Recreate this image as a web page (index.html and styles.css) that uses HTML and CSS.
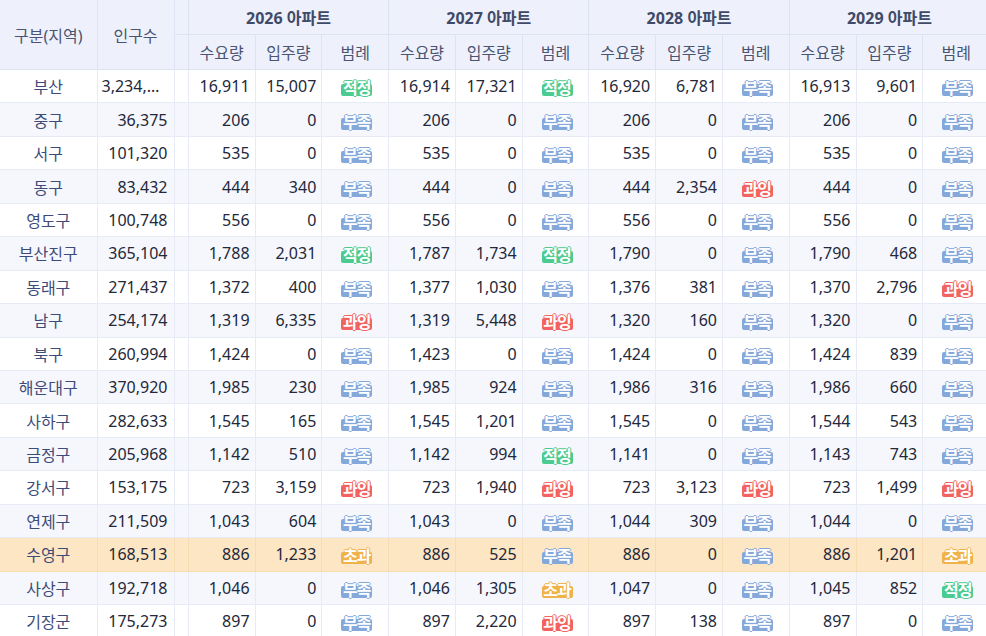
FILE: index.html
```html
<!DOCTYPE html>
<html lang="ko">
<head>
<meta charset="utf-8">
<title>부산 아파트 수급</title>
<link rel="stylesheet" href="styles.css">
</head>
<body>
<table class="grid">
<colgroup>
<col class="c-name"><col class="c-pop"><col class="c-gap">
<col class="c-d"><col class="c-d"><col class="c-l">
<col class="c-d"><col class="c-d"><col class="c-l">
<col class="c-d"><col class="c-d"><col class="c-l">
<col class="c-d"><col class="c-d"><col class="c-l">
</colgroup>
<thead>
<tr>
<th rowspan="2" class="first">구분(지역)</th>
<th rowspan="2">인구수</th>
<th></th>
<th colspan="3" class="grp">2026 아파트</th>
<th colspan="3" class="grp">2027 아파트</th>
<th colspan="3" class="grp">2028 아파트</th>
<th colspan="3" class="grp">2029 아파트</th>
</tr>
<tr>
<th></th>
<th>수요량</th><th>입주량</th><th>범례</th>
<th>수요량</th><th>입주량</th><th>범례</th>
<th>수요량</th><th>입주량</th><th>범례</th>
<th>수요량</th><th>입주량</th><th>범례</th>
</tr>
</thead>
<tbody>
<tr><td class="name">부산</td><td class="pop">3,234,919</td><td></td><td>16,911</td><td>15,007</td><td class="lg"><span class="b ok">적정</span></td><td>16,914</td><td>17,321</td><td class="lg"><span class="b ok">적정</span></td><td>16,920</td><td>6,781</td><td class="lg"><span class="b lack">부족</span></td><td>16,913</td><td>9,601</td><td class="lg"><span class="b lack">부족</span></td></tr>
<tr><td class="name">중구</td><td class="pop">36,375</td><td></td><td>206</td><td>0</td><td class="lg"><span class="b lack">부족</span></td><td>206</td><td>0</td><td class="lg"><span class="b lack">부족</span></td><td>206</td><td>0</td><td class="lg"><span class="b lack">부족</span></td><td>206</td><td>0</td><td class="lg"><span class="b lack">부족</span></td></tr>
<tr><td class="name">서구</td><td class="pop">101,320</td><td></td><td>535</td><td>0</td><td class="lg"><span class="b lack">부족</span></td><td>535</td><td>0</td><td class="lg"><span class="b lack">부족</span></td><td>535</td><td>0</td><td class="lg"><span class="b lack">부족</span></td><td>535</td><td>0</td><td class="lg"><span class="b lack">부족</span></td></tr>
<tr><td class="name">동구</td><td class="pop">83,432</td><td></td><td>444</td><td>340</td><td class="lg"><span class="b lack">부족</span></td><td>444</td><td>0</td><td class="lg"><span class="b lack">부족</span></td><td>444</td><td>2,354</td><td class="lg"><span class="b over">과잉</span></td><td>444</td><td>0</td><td class="lg"><span class="b lack">부족</span></td></tr>
<tr><td class="name">영도구</td><td class="pop">100,748</td><td></td><td>556</td><td>0</td><td class="lg"><span class="b lack">부족</span></td><td>556</td><td>0</td><td class="lg"><span class="b lack">부족</span></td><td>556</td><td>0</td><td class="lg"><span class="b lack">부족</span></td><td>556</td><td>0</td><td class="lg"><span class="b lack">부족</span></td></tr>
<tr><td class="name">부산진구</td><td class="pop">365,104</td><td></td><td>1,788</td><td>2,031</td><td class="lg"><span class="b ok">적정</span></td><td>1,787</td><td>1,734</td><td class="lg"><span class="b ok">적정</span></td><td>1,790</td><td>0</td><td class="lg"><span class="b lack">부족</span></td><td>1,790</td><td>468</td><td class="lg"><span class="b lack">부족</span></td></tr>
<tr><td class="name">동래구</td><td class="pop">271,437</td><td></td><td>1,372</td><td>400</td><td class="lg"><span class="b lack">부족</span></td><td>1,377</td><td>1,030</td><td class="lg"><span class="b lack">부족</span></td><td>1,376</td><td>381</td><td class="lg"><span class="b lack">부족</span></td><td>1,370</td><td>2,796</td><td class="lg"><span class="b over">과잉</span></td></tr>
<tr><td class="name">남구</td><td class="pop">254,174</td><td></td><td>1,319</td><td>6,335</td><td class="lg"><span class="b over">과잉</span></td><td>1,319</td><td>5,448</td><td class="lg"><span class="b over">과잉</span></td><td>1,320</td><td>160</td><td class="lg"><span class="b lack">부족</span></td><td>1,320</td><td>0</td><td class="lg"><span class="b lack">부족</span></td></tr>
<tr><td class="name">북구</td><td class="pop">260,994</td><td></td><td>1,424</td><td>0</td><td class="lg"><span class="b lack">부족</span></td><td>1,423</td><td>0</td><td class="lg"><span class="b lack">부족</span></td><td>1,424</td><td>0</td><td class="lg"><span class="b lack">부족</span></td><td>1,424</td><td>839</td><td class="lg"><span class="b lack">부족</span></td></tr>
<tr><td class="name">해운대구</td><td class="pop">370,920</td><td></td><td>1,985</td><td>230</td><td class="lg"><span class="b lack">부족</span></td><td>1,985</td><td>924</td><td class="lg"><span class="b lack">부족</span></td><td>1,986</td><td>316</td><td class="lg"><span class="b lack">부족</span></td><td>1,986</td><td>660</td><td class="lg"><span class="b lack">부족</span></td></tr>
<tr><td class="name">사하구</td><td class="pop">282,633</td><td></td><td>1,545</td><td>165</td><td class="lg"><span class="b lack">부족</span></td><td>1,545</td><td>1,201</td><td class="lg"><span class="b lack">부족</span></td><td>1,545</td><td>0</td><td class="lg"><span class="b lack">부족</span></td><td>1,544</td><td>543</td><td class="lg"><span class="b lack">부족</span></td></tr>
<tr><td class="name">금정구</td><td class="pop">205,968</td><td></td><td>1,142</td><td>510</td><td class="lg"><span class="b lack">부족</span></td><td>1,142</td><td>994</td><td class="lg"><span class="b ok">적정</span></td><td>1,141</td><td>0</td><td class="lg"><span class="b lack">부족</span></td><td>1,143</td><td>743</td><td class="lg"><span class="b lack">부족</span></td></tr>
<tr><td class="name">강서구</td><td class="pop">153,175</td><td></td><td>723</td><td>3,159</td><td class="lg"><span class="b over">과잉</span></td><td>723</td><td>1,940</td><td class="lg"><span class="b over">과잉</span></td><td>723</td><td>3,123</td><td class="lg"><span class="b over">과잉</span></td><td>723</td><td>1,499</td><td class="lg"><span class="b over">과잉</span></td></tr>
<tr><td class="name">연제구</td><td class="pop">211,509</td><td></td><td>1,043</td><td>604</td><td class="lg"><span class="b lack">부족</span></td><td>1,043</td><td>0</td><td class="lg"><span class="b lack">부족</span></td><td>1,044</td><td>309</td><td class="lg"><span class="b lack">부족</span></td><td>1,044</td><td>0</td><td class="lg"><span class="b lack">부족</span></td></tr>
<tr class="hl"><td class="name">수영구</td><td class="pop">168,513</td><td></td><td>886</td><td>1,233</td><td class="lg"><span class="b exc">초과</span></td><td>886</td><td>525</td><td class="lg"><span class="b lack">부족</span></td><td>886</td><td>0</td><td class="lg"><span class="b lack">부족</span></td><td>886</td><td>1,201</td><td class="lg"><span class="b exc">초과</span></td></tr>
<tr><td class="name">사상구</td><td class="pop">192,718</td><td></td><td>1,046</td><td>0</td><td class="lg"><span class="b lack">부족</span></td><td>1,046</td><td>1,305</td><td class="lg"><span class="b exc">초과</span></td><td>1,047</td><td>0</td><td class="lg"><span class="b lack">부족</span></td><td>1,045</td><td>852</td><td class="lg"><span class="b ok">적정</span></td></tr>
<tr><td class="name">기장군</td><td class="pop">175,273</td><td></td><td>897</td><td>0</td><td class="lg"><span class="b lack">부족</span></td><td>897</td><td>2,220</td><td class="lg"><span class="b over">과잉</span></td><td>897</td><td>138</td><td class="lg"><span class="b lack">부족</span></td><td>897</td><td>0</td><td class="lg"><span class="b lack">부족</span></td></tr>
</tbody>
</table>
</body>
</html>
```
FILE: styles.css
```css
html, body {
  margin: 0;
  padding: 0;
  background: #ffffff;
  overflow: hidden;
}
body {
  font-family: "Noto Sans", "Noto Sans CJK KR", sans-serif;
}
.grid {
  border-collapse: collapse;
  table-layout: fixed;
  width: 989.5px;
}
.c-name { width: 97px; }
.c-pop { width: 77px; }
.c-gap { width: 14.3px; }
.c-d { width: 66.77px; }
.c-l { width: 66.77px; }

.grid th {
  background: #eef1fb;
  color: #4a5573;
  font-weight: 400;
  font-size: 16px;
  height: 34px;
  padding: 0;
  border: 1px solid #dde3f3;
  border-top: none;
  white-space: nowrap;
}
.grid th.first,
.grid td:first-child {
  border-left: none;
}
.grid th.grp {
  font-weight: 700;
  font-size: 16px;
  color: #3f4a68;
}
.grid td {
  height: 32.45px;
  padding: 0 5px;
  font-size: 16px;
  color: #23283a;
  text-align: right;
  white-space: nowrap;
  border: 1px solid #e7ebf5;
}
.grid tbody tr:nth-child(even) td {
  background: #f5f7fd;
}
.grid tbody tr.hl td {
  background: #fde6c3;
  border-color: #f7dbb3;
}
.grid td.name {
  text-align: center;
  color: #3d4b78;
  font-size: 16px;
  padding: 0;
}
.grid td.pop {
  overflow: hidden;
  text-overflow: ellipsis;
  padding: 0 6px 0 4px;
}
.grid td.lg {
  text-align: center;
  padding: 0 0 0 3px;
}
.b {
  display: inline-block;
  width: 31px;
  height: 12px;
  line-height: 8px;
  border-radius: 2px;
  color: #ffffff;
  font-weight: 700;
  font-size: 16px;
  letter-spacing: -1px;
  text-align: center;
  vertical-align: -2px;
}
.b.ok {
  background: #4ccb90;
  text-shadow: 1px 0 0 #4ccb90, -1px 0 0 #4ccb90, 0 1px 0 #4ccb90, 0 -1px 0 #4ccb90;
}
.b.lack {
  background: #85a8da;
  text-shadow: 1px 0 0 #85a8da, -1px 0 0 #85a8da, 0 1px 0 #85a8da, 0 -1px 0 #85a8da;
}
.b.over {
  background: #f2625e;
  text-shadow: 1px 0 0 #f2625e, -1px 0 0 #f2625e, 0 1px 0 #f2625e, 0 -1px 0 #f2625e;
}
.b.exc {
  background: #f0b24a;
  text-shadow: 1px 0 0 #f0b24a, -1px 0 0 #f0b24a, 0 1px 0 #f0b24a, 0 -1px 0 #f0b24a;
}
```
